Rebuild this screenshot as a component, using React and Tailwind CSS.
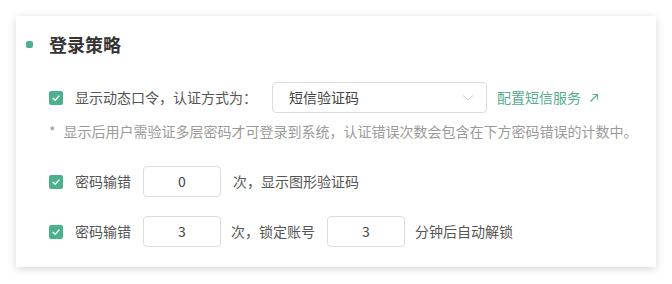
import React from 'react';

const font = { fontFamily: '"Noto Sans CJK SC", "Noto Sans", sans-serif' };

function Check() {
  return (
    <span className="w-[14px] h-[14px] rounded-[2px] bg-[#4bb08c] flex items-center justify-center shrink-0">
      <svg width="10" height="10" viewBox="0 0 10 10" fill="none">
        <path d="M2 5.2 L4.2 7.2 L8 3" stroke="white" strokeWidth="1.3" strokeLinecap="round" strokeLinejoin="round" />
      </svg>
    </span>
  );
}

function NumInput({ value }) {
  return (
    <div className="w-[78px] h-[31px] border border-[#dcdcdc] rounded-[4px] flex items-center justify-center text-[14px] text-[#444]">
      {value}
    </div>
  );
}

export default function App() {
  return (
    <div className="w-[672px] h-[284px] bg-white p-4 box-border" style={font}>
      <div className="w-[640px] h-[251px] bg-white shadow-[0_2px_8px_rgba(0,0,0,0.16)] pl-[10px] pt-[15px]">
        <div className="flex items-center h-[26px]">
          <span className="w-[7px] h-[7px] rounded-[2px] bg-[#4bb08c]" />
          <h2 className="ml-[16px] text-[18px] font-bold text-[#333]">登录策略</h2>
        </div>

        <div className="pl-[23px] mt-[25px] text-[14px] text-[#555]">
          <div className="flex items-center h-[31px]">
            <Check />
            <span className="ml-[12px] w-[197px]">显示动态口令，认证方式为：</span>
            <div className="w-[215px] h-[31px] border border-[#dcdcdc] rounded-[4px] flex items-center justify-between pl-[16px] pr-[12px] text-[#444]">
              <span>短信验证码</span>
              <svg width="12" height="8" viewBox="0 0 12 8" fill="none">
                <path d="M1 1.5 L6 6 L11 1.5" stroke="#c8c8c8" strokeWidth="1" />
              </svg>
            </div>
            <span className="ml-[10px] text-[#55ad8c] flex items-center">
              配置短信服务
              <svg className="ml-[8px]" width="10" height="10" viewBox="0 0 10 10" fill="none">
                <path d="M1.5 8.5 L8.5 1.5 M3.5 1.5 H8.5 V6.5" stroke="#55ad8c" strokeWidth="1.1" />
              </svg>
            </span>
          </div>

          <p className="mt-[8px] h-[20px] leading-[20px] text-[#9a9a9a]">
            <span className="mr-[8px]">*</span>显示后用户需验证多层密码才可登录到系统，认证错误次数会包含在下方密码错误的计数中。
          </p>

          <div className="flex items-center h-[31px] mt-[25px]">
            <Check />
            <span className="ml-[12px]">密码输错</span>
            <div className="ml-[12px]"><NumInput value="0" /></div>
            <span className="ml-[12px]">次，显示图形验证码</span>
          </div>

          <div className="flex items-center h-[31px] mt-[19px]">
            <Check />
            <span className="ml-[12px]">密码输错</span>
            <div className="ml-[12px]"><NumInput value="3" /></div>
            <span className="ml-[10px]">次，锁定账号</span>
            <div className="ml-[12px]"><NumInput value="3" /></div>
            <span className="ml-[10px]">分钟后自动解锁</span>
          </div>
        </div>
      </div>
    </div>
  );
}
